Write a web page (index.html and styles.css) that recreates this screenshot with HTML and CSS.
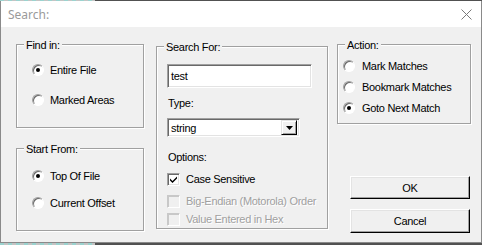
FILE: index.html
```html
<!DOCTYPE html>
<html lang="en">
<head>
    <meta charset="UTF-8">
    <title>Search:</title>
    <link rel="stylesheet" href="styles.css">
</head>
<body>
    <div class="window">
        <div class="titlebar">
            <span class="title">Search:</span>
            <svg class="close" width="11" height="11" viewBox="0 0 11 11">
                <path d="M0.5 0.5 L10.5 10.5 M10.5 0.5 L0.5 10.5" stroke="#7a7a7a" stroke-width="1" fill="none"/>
            </svg>
        </div>

        <div class="client">
            <!-- left column: where to search / where to start -->
            <div class="col col-left">
                <div class="group group-find">
                    <span class="group-label">Find in:</span>
                    <div class="option"><span class="radio checked"></span>Entire File</div>
                    <div class="option"><span class="radio"></span>Marked Areas</div>
                </div>
                <div class="group group-start">
                    <span class="group-label">Start From:</span>
                    <div class="option"><span class="radio checked"></span>Top Of File</div>
                    <div class="option"><span class="radio"></span>Current Offset</div>
                </div>
            </div>

            <!-- middle column: search text and options -->
            <div class="col col-mid">
                <div class="group group-search">
                    <span class="group-label">Search For:</span>
                    <div class="textbox">test</div>
                    <div class="field-label label-type">Type:</div>
                    <div class="combo">
                        <span class="combo-text">string</span>
                        <span class="combo-btn">
                            <svg width="7" height="4" viewBox="0 0 7 4"><path d="M0 0 H7 L3.5 4 Z" fill="#000"/></svg>
                        </span>
                    </div>
                    <div class="field-label label-options">Options:</div>
                    <div class="check-row row-case"><span class="check checked">
                        <svg width="9" height="9" viewBox="0 0 9 9"><path d="M1 3.5 L3.5 6 L8 1.5 V3.5 L3.5 8 L1 5.5 Z" fill="#000"/></svg>
                    </span>Case Sensitive</div>
                    <div class="check-row row-endian disabled"><span class="check"></span>Big-Endian (Motorola) Order</div>
                    <div class="check-row row-hex disabled"><span class="check"></span>Value Entered in Hex</div>
                </div>
            </div>

            <!-- right column: action + buttons -->
            <div class="col col-right">
                <div class="group group-action">
                    <span class="group-label">Action:</span>
                    <div class="option"><span class="radio"></span>Mark Matches</div>
                    <div class="option"><span class="radio"></span>Bookmark Matches</div>
                    <div class="option"><span class="radio checked"></span>Goto Next Match</div>
                </div>
                <button class="btn btn-ok">OK</button>
                <button class="btn btn-cancel">Cancel</button>
            </div>
        </div>
    </div>
</body>
</html>
```

FILE: styles.css
```css
html, body {
    margin: 0;
    height: 100%;
}
body {
    background:
        repeating-linear-gradient(90deg, #9bd3cf 0 4px, #c4c4c4 4px 8px) 0 0 / 95px 100% no-repeat,
        #515151;
    font-family: "Liberation Sans", Arial, sans-serif;
    font-size: 11px;
    letter-spacing: -0.3px;
    color: #000;
    overflow: hidden;
}
.window {
    margin-top: 1px;
    width: 480px;
    height: 241px;
    border: 1px solid #8a8a8a;
    border-top: 0;
    background-color: #f0f0f0;
}
.titlebar {
    height: 26px;
    background-color: white;
    display: flex;
    align-items: center;
    justify-content: space-between;
    padding: 0 9px 0 7px;
}
.title {
    font-family: "Noto Sans", "Open Sans", sans-serif;
    font-size: 12px;
    letter-spacing: 0;
    color: #9a9a9a;
}
.close {
    display: block;
}

.client {
    display: flex;
    align-items: flex-start;
    padding: 17px 0 0 15px;
}
.col {
    display: flex;
    flex-direction: column;
}
.col-left {
    width: 128px;
}
.col-mid {
    width: 172px;
    margin-left: 12px;
    margin-top: 2px;
}
.col-right {
    width: 134px;
    margin-left: 9px;
}

/* etched group box */
.group {
    position: relative;
    box-sizing: border-box;
    border: 1px solid #a0a0a0;
    box-shadow: inset 1px 1px #fff, 1px 1px #fff;
    display: flex;
    flex-direction: column;
}
.group-label {
    position: absolute;
    top: -7px;
    left: 7px;
    padding: 0 2px;
    line-height: 14px;
    background-color: #f0f0f0;
}
.group-find {
    height: 84px;
    padding: 18px 0 0 15px;
    gap: 16px;
}
.group-start {
    height: 83px;
    margin-top: 20px;
    padding: 20px 0 0 15px;
    gap: 13px;
}
.group-action {
    height: 80px;
    padding: 14px 0 0 5px;
    gap: 7px;
}
.group-search {
    height: 183px;
    padding: 17px 0 0 10px;
}

.option, .check-row {
    display: flex;
    align-items: center;
    height: 14px;
    white-space: nowrap;
}

/* radio button */
.radio {
    position: relative;
    box-sizing: border-box;
    width: 12px;
    height: 12px;
    margin-right: 6px;
    border-radius: 50%;
    border: 1px solid;
    border-color: #a0a0a0 #fff #fff #a0a0a0;
    background-color: white;
    box-shadow: inset 1px 1px #696969;
}
.group-action .radio {
    margin-right: 7px;
}
.radio.checked::after {
    content: "";
    position: absolute;
    left: 3px;
    top: 3px;
    width: 4px;
    height: 4px;
    border-radius: 50%;
    background-color: black;
}

/* text fields */
.textbox, .combo {
    box-sizing: border-box;
    border: 1px solid;
    border-color: #a0a0a0 #fff #fff #a0a0a0;
    box-shadow: inset 1px 1px #696969, inset -1px -1px #e3e3e3;
    background-color: white;
}
.textbox {
    width: 145px;
    height: 24px;
    padding: 0 3px;
    line-height: 22px;
}
.field-label {
    line-height: 14px;
    padding-left: 1px;
}
.label-type {
    margin-top: 8px;
}
.combo {
    width: 133px;
    height: 19px;
    margin-top: 8px;
    display: flex;
    align-items: center;
    justify-content: space-between;
    padding: 2px;
}
.combo-text {
    padding-left: 1px;
}
.combo-btn {
    box-sizing: border-box;
    width: 16px;
    height: 15px;
    display: flex;
    align-items: center;
    justify-content: center;
    background-color: #f0f0f0;
    border: 1px solid;
    border-color: #e3e3e3 #000 #000 #e3e3e3;
    box-shadow: inset 1px 1px #fff, inset -1px -1px #a0a0a0;
}
.label-options {
    margin-top: 13px;
}

/* check boxes */
.check {
    box-sizing: border-box;
    width: 13px;
    height: 13px;
    margin-right: 6px;
    border: 1px solid;
    border-color: #a0a0a0 #fff #fff #a0a0a0;
    box-shadow: inset 1px 1px #696969, inset -1px -1px #e3e3e3;
    background-color: white;
    display: flex;
    align-items: center;
    justify-content: center;
}
.row-case {
    margin-top: 8px;
}
.row-endian {
    margin-top: 8px;
}
.row-hex {
    margin-top: 4px;
}
.disabled {
    color: #a0a0a0;
    text-shadow: 1px 1px #fff;
}
.disabled .check {
    background-color: #f0f0f0;
    border-color: #c8c8c8 #fff #fff #c8c8c8;
    box-shadow: inset 1px 1px #c8c8c8, inset -1px -1px #f0f0f0;
}

/* push buttons */
.btn {
    box-sizing: border-box;
    width: 120px;
    margin-left: 13px;
    font-family: inherit;
    font-size: 11px;
    letter-spacing: -0.3px;
    color: black;
    background-color: #f0f0f0;
    border: 1px solid;
    border-color: #fff #000 #000 #fff;
    box-shadow: inset -1px -1px #a0a0a0, inset 1px 1px #e3e3e3;
    padding: 0;
}
.btn-ok {
    height: 23px;
    margin-top: 52px;
}
.btn-cancel {
    height: 24px;
    margin-top: 10px;
}
```
